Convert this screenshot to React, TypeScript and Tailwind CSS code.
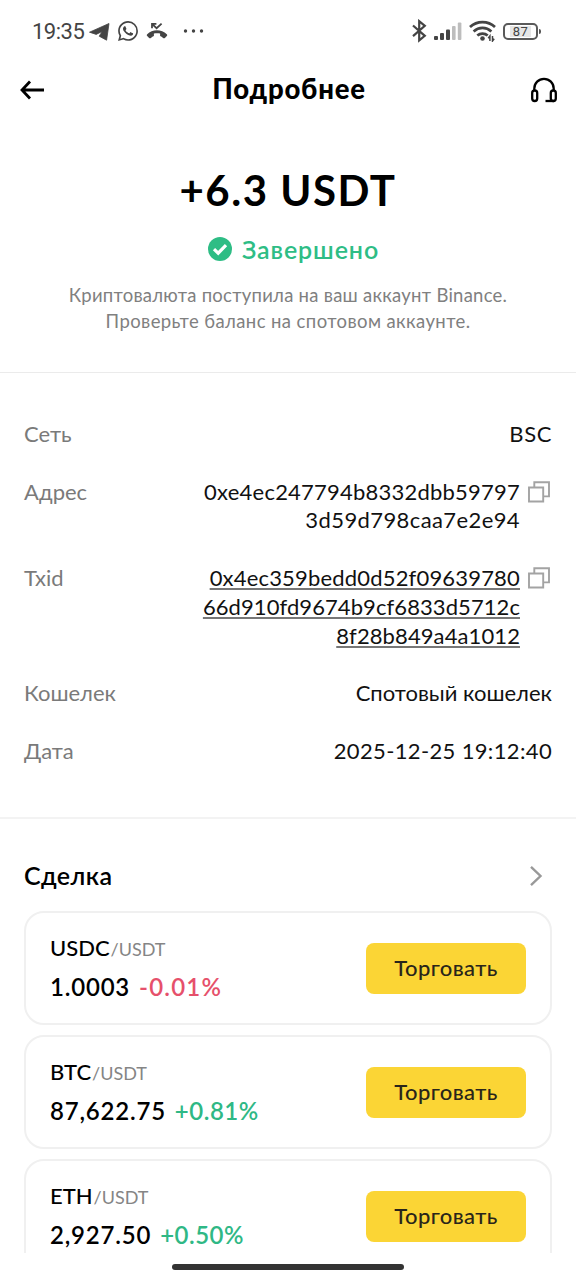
import { ReactNode } from "react";
import { SiWhatsapp } from "react-icons/si";

type Pair = {
  base: string;
  quote: string;
  price: string;
  change: string;
};

const pairs: Pair[] = [
  { base: "USDC", quote: "USDT", price: "1.0003", change: "-0.01%" },
  { base: "BTC", quote: "USDT", price: "87,622.75", change: "+0.81%" },
  { base: "ETH", quote: "USDT", price: "2,927.50", change: "+0.50%" },
];

function StatusBar() {
  return (
    <div className="flex h-[62px] shrink-0 items-center justify-between pl-8 pr-[35px] text-[#444]">
      <div className="flex items-center">
        <span className="w-[57px] pt-px font-['Roboto',sans-serif] text-[22px] leading-none tracking-[-0.5px]">
          19:35
        </span>
        <svg className="mt-0.5" width="21" height="18" viewBox="0 0 21 18" fill="currentColor">
          <path d="M0.5 9.2 20 0.5 17.6 17.2 10.2 13.2 13.2 8.4 7.2 11.4Z" stroke="currentColor" strokeWidth="0.8" strokeLinejoin="round" />
        </svg>
        <SiWhatsapp className="ml-2 size-5" />
        <svg className="ml-2" width="22" height="18" viewBox="0 0 22 18" fill="none">
          <path
            d="M1.2 12.2C6.2 7 15.6 7 20.8 12.2c.6.6.6 1.2 0 1.8l-1.9 1.9c-.6.5-1.2.5-1.8 0-1-.9-1.9-1.4-3-1.9v-2.4c-2-.6-4.2-.6-6.2 0V14c-1.100.5-2 1-3 1.9-.6.5-1.2.5-1.8 0L1.2 14c-.6-.6-.6-1.2 0-1.8Z"
            fill="currentColor"
          />
          <path d="M6 6.2V1.8h4.4M6 1.8l4.6 4.4L15.6 1.6" stroke="currentColor" strokeWidth="1.8" />
        </svg>
        <svg className="ml-3.5" width="22" height="4" viewBox="0 0 22 4" fill="currentColor">
          <circle cx="3.5" cy="2" r="1.7" />
          <circle cx="11.5" cy="2" r="1.7" />
          <circle cx="19.5" cy="2" r="1.7" />
        </svg>
      </div>

      <div className="flex items-center">
        <svg width="15" height="24" viewBox="0 0 15 24" fill="none" stroke="currentColor" strokeWidth="2.2">
          <path d="m1 6.5 11.8 10.3-5.6 4.6V2.2l5.6 4.6L1 17.1" />
        </svg>
        <svg className="ml-[7px]" width="28" height="18" viewBox="0 0 28 18" fill="currentColor">
          <rect x="0" y="14" width="4" height="4" rx="1" />
          <rect x="6" y="11" width="4" height="7" rx="1" />
          <rect x="12" y="7.5" width="4" height="10.5" rx="1" />
          <rect x="18" y="4" width="3.6" height="14" rx="1" fill="#bdbdbd" />
          <rect x="23.8" y="0.5" width="3.6" height="17.5" rx="1" fill="#bdbdbd" />
        </svg>
        <svg className="ml-[7px]" width="27" height="22" viewBox="0 0 27 22" fill="none">
          <g stroke="currentColor" strokeWidth="2.7">
            <path d="M1 7c7-6.6 18-6.6 25 0" />
            <path d="M4.6 11.4c5.2-4.6 12.6-4.6 17.8 0" />
            <path d="M8.3 15.6c3-2.6 7.4-2.6 10.4 0" />
          </g>
          <circle cx="13.5" cy="18.5" r="2.3" fill="currentColor" />
          <path d="M20.9 21v-5l-1.7 2.2M23.5 16v5l1.7-2.2" stroke="currentColor" strokeWidth="1.5" />
        </svg>
        <div className="ml-[7px] flex h-[17px] w-[35px] items-center justify-center rounded-[5px] border-2 border-[#5a5a5a]">
          <span className="flex h-[11px] w-[21px] items-center justify-center bg-[#e6e6e6] font-['Roboto',sans-serif] text-[13px] leading-none tracking-[0.5px]">
            87
          </span>
        </div>
        <span className="ml-px h-[5px] w-[2px] rounded-r bg-[#555]" />
      </div>
    </div>
  );
}

function Header() {
  return (
    <header className="flex h-14 shrink-0 items-center justify-between pl-[19px] pr-[18px]">
      <svg width="26" height="20" viewBox="0 0 26 20" fill="none" stroke="#000" strokeWidth="2.8">
        <path d="M25 10H3.5M11 1.5 3 10l8 8.5" />
      </svg>
      <h1 className="-mt-[3px] ml-[3px] text-[27.5px] font-black leading-none tracking-[0.8px]">Подробнее</h1>
      <svg width="28" height="26" viewBox="0 0 28 26" fill="none" stroke="#000" strokeWidth="2.3">
        <path d="M4.3 14v-2.5a9.7 9.7 0 0 1 19.4 0V14" />
        <rect x="2.2" y="13.5" width="5" height="10.5" rx="2.5" />
        <rect x="20.8" y="13.5" width="5" height="10.5" rx="2.5" />
        <path d="M24 24h-8.5" />
      </svg>
    </header>
  );
}

function CopyIcon() {
  return (
    <svg className="mt-0.5 shrink-0" width="24" height="24" viewBox="0 0 24 24" fill="none" stroke="#a3a3a3" strokeWidth="1.9">
      <path d="M2 7.5h14.2v14H2zM7.3 7.3V2.2H22v14.2h-5.3" />
    </svg>
  );
}

function DetailRow({ label, children, copyable }: { label: string; children: ReactNode; copyable?: boolean }) {
  return (
    <div className="flex justify-between text-[22px] leading-[28.8px]">
      <span className="text-[#7a7a7a]">{label}</span>
      <div className="flex gap-[7px]">
        <div className="flex flex-col items-end text-[#111]">{children}</div>
        {copyable && (
          <button className="flex items-start pr-px">
            <CopyIcon />
          </button>
        )}
      </div>
    </div>
  );
}

function PairCard({ pair }: { pair: Pair }) {
  const isDown = pair.change.startsWith("-");

  return (
    <div className="flex h-[114px] shrink-0 items-center justify-between rounded-[20px] border-2 border-[#f0f0f0] px-6">
      <div className="-mt-[2px] flex flex-col gap-[2px]">
        <div className="flex items-baseline leading-9">
          <span className="text-[22px] font-medium">{pair.base}</span>
          <span className="ml-px text-[18px] text-[#858585]">/{pair.quote}</span>
        </div>
        <div className="flex items-baseline gap-[9px] text-2xl leading-9">
          <span className="font-semibold tracking-[0.8px]">{pair.price}</span>
          <span
            className={`font-semibold ${
              isDown ? "tracking-[1.2px] text-[#e6506b]" : "tracking-[0.5px] text-[#2fb885]"
            }`}
          >
            {pair.change}
          </span>
        </div>
      </div>
      <button className="h-[51px] w-40 rounded-lg bg-[#fbd535] pb-px text-[22px] font-medium tracking-[0.4px] text-[#29251a]">
        Торговать
      </button>
    </div>
  );
}

export default function App() {
  return (
    <div className="flex h-[1280px] w-[576px] flex-col overflow-hidden bg-white font-['Lato',sans-serif] text-black">
      <StatusBar />
      <Header />

      <section className="flex h-[255px] shrink-0 flex-col items-center border-b border-[#ebebeb] pt-[42px]">
        <p className="text-[42px] font-bold leading-[60px] tracking-[1.5px]">+6.3 USDT</p>
        <div className="ml-[10px] mt-[11px] flex h-9 items-center gap-[9px] text-[#2ebd85]">
          <svg width="26" height="26" viewBox="0 0 26 26" fill="none">
            <circle cx="13" cy="13" r="12" fill="currentColor" />
            <path d="m7 13.2 4.2 4L19 9.2" stroke="#fff" strokeWidth="3.2" />
          </svg>
          <span className="text-[25px] font-semibold leading-9 tracking-[0.9px]">Завершено</span>
        </div>
        <p className="mt-[15px] text-center text-[18.5px] leading-[26px] text-[#808080]">
          <span className="block tracking-[0.25px]">Криптовалюта поступила на ваш аккаунт Binance.</span>
          <span className="block tracking-[0.4px]">Проверьте баланс на спотовом аккаунте.</span>
        </p>
      </section>

      <section className="flex h-[446px] shrink-0 flex-col gap-[28.8px] border-b-2 border-[#f3f3f3] px-6 pt-[47px]">
        <DetailRow label="Сеть">
          <span className="tracking-[0.6px]">BSC</span>
        </DetailRow>
        <DetailRow label="Адрес" copyable>
          <span className="tracking-[0.22px]">0xe4ec247794b8332dbb59797</span>
          <span className="tracking-[0.4px]">3d59d798caa7e2e94</span>
        </DetailRow>
        <DetailRow label="Txid" copyable>
          <span className="underline decoration-[#777] decoration-[1.5px] underline-offset-2 tracking-[0.18px]">0x4ec359bedd0d52f09639780</span>
          <span className="underline decoration-[#777] decoration-[1.5px] underline-offset-2 tracking-[0.08px]">66d910fd9674b9cf6833d5712c</span>
          <span className="underline decoration-[#777] decoration-[1.5px] underline-offset-2 tracking-[0.1px]">8f28b849a4a1012</span>
        </DetailRow>
        <DetailRow label="Кошелек">Спотовый кошелек</DetailRow>
        <DetailRow label="Дата">
          <span className="tracking-[0.35px]">2025-12-25 19:12:40</span>
        </DetailRow>
      </section>

      <section className="flex h-[434px] shrink-0 flex-col overflow-hidden px-6">
        <div className="flex h-[92px] shrink-0 items-center justify-between pr-[9px] pt-[22px]">
          <h2 className="text-[25px] font-semibold tracking-[0.4px]">Сделка</h2>
          <svg width="14" height="22" viewBox="0 0 14 22" fill="none" stroke="#999" strokeWidth="2.4">
            <path d="m2 1.8 9.5 9.2L2 20.2" />
          </svg>
        </div>
        <div className="flex flex-col gap-[10px]">
          {pairs.map((pair) => (
            <PairCard key={pair.base} pair={pair} />
          ))}
        </div>
      </section>

      <div className="flex grow items-center justify-center pt-px">
        <div className="h-[6px] w-[232px] rounded-full bg-[#333]" />
      </div>
    </div>
  );
}
